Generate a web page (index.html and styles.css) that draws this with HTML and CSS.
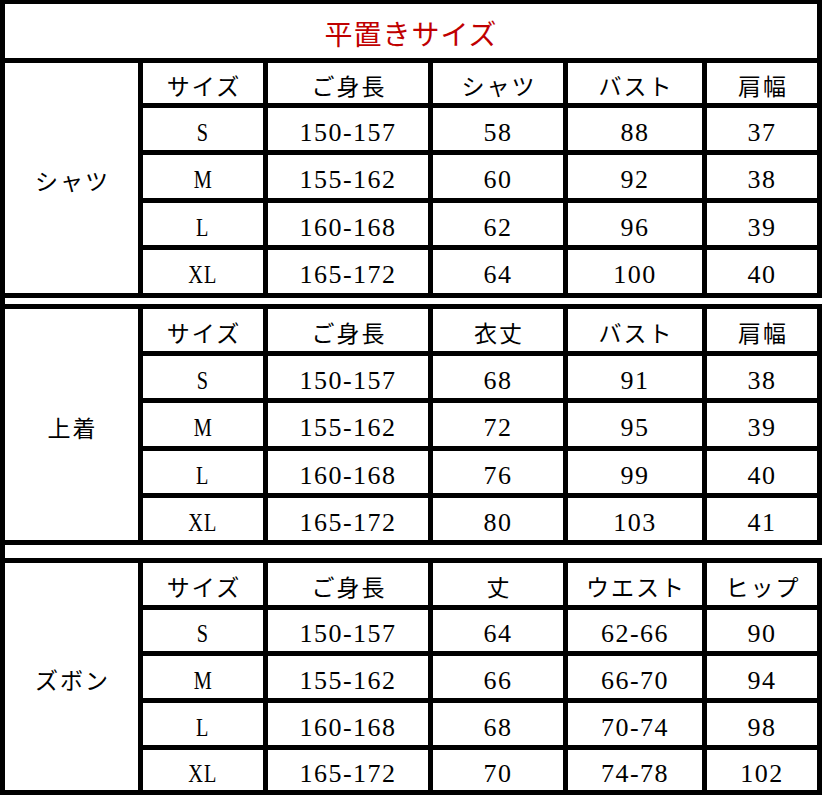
FILE: index.html
```
<!DOCTYPE html>
<html lang="ja">
<head>
<meta charset="utf-8">
<title>平置きサイズ</title>
<link rel="stylesheet" href="styles.css">
</head>
<body>
<div class="chart">
  <div class="title">平置きサイズ</div>

  <div class="sec s1">
    <div class="cell jp label">シャツ</div>
    <div class="cell jp">サイズ</div>
    <div class="cell jp">ご身長</div>
    <div class="cell jp">シャツ</div>
    <div class="cell jp">バスト</div>
    <div class="cell jp">肩幅</div>
    <div class="cell"><span class="sz">S</span></div>
    <div class="cell">150-157</div>
    <div class="cell">58</div>
    <div class="cell">88</div>
    <div class="cell">37</div>
    <div class="cell"><span class="sz">M</span></div>
    <div class="cell">155-162</div>
    <div class="cell">60</div>
    <div class="cell">92</div>
    <div class="cell">38</div>
    <div class="cell"><span class="sz">L</span></div>
    <div class="cell">160-168</div>
    <div class="cell">62</div>
    <div class="cell">96</div>
    <div class="cell">39</div>
    <div class="cell"><span class="sz">XL</span></div>
    <div class="cell">165-172</div>
    <div class="cell">64</div>
    <div class="cell">100</div>
    <div class="cell">40</div>
  </div>

  <div class="spacer sp1"></div>

  <div class="sec s2">
    <div class="cell jp label">上着</div>
    <div class="cell jp">サイズ</div>
    <div class="cell jp">ご身長</div>
    <div class="cell jp">衣丈</div>
    <div class="cell jp">バスト</div>
    <div class="cell jp">肩幅</div>
    <div class="cell"><span class="sz">S</span></div>
    <div class="cell">150-157</div>
    <div class="cell">68</div>
    <div class="cell">91</div>
    <div class="cell">38</div>
    <div class="cell"><span class="sz">M</span></div>
    <div class="cell">155-162</div>
    <div class="cell">72</div>
    <div class="cell">95</div>
    <div class="cell">39</div>
    <div class="cell"><span class="sz">L</span></div>
    <div class="cell">160-168</div>
    <div class="cell">76</div>
    <div class="cell">99</div>
    <div class="cell">40</div>
    <div class="cell"><span class="sz">XL</span></div>
    <div class="cell">165-172</div>
    <div class="cell">80</div>
    <div class="cell">103</div>
    <div class="cell">41</div>
  </div>

  <div class="spacer sp2"></div>

  <div class="sec s3">
    <div class="cell jp label">ズボン</div>
    <div class="cell jp">サイズ</div>
    <div class="cell jp">ご身長</div>
    <div class="cell jp">丈</div>
    <div class="cell jp">ウエスト</div>
    <div class="cell jp">ヒップ</div>
    <div class="cell"><span class="sz">S</span></div>
    <div class="cell">150-157</div>
    <div class="cell">64</div>
    <div class="cell">62-66</div>
    <div class="cell">90</div>
    <div class="cell"><span class="sz">M</span></div>
    <div class="cell">155-162</div>
    <div class="cell">66</div>
    <div class="cell">66-70</div>
    <div class="cell">94</div>
    <div class="cell"><span class="sz">L</span></div>
    <div class="cell">160-168</div>
    <div class="cell">68</div>
    <div class="cell">70-74</div>
    <div class="cell">98</div>
    <div class="cell"><span class="sz">XL</span></div>
    <div class="cell">165-172</div>
    <div class="cell">70</div>
    <div class="cell">74-78</div>
    <div class="cell">102</div>
  </div>
</div>
</body>
</html>
```

FILE: styles.css
```
* { box-sizing: border-box; }
body { margin: 0; background: #fff; }
.chart {
  width: 822px;
  font-family: "Liberation Serif", "Noto Sans CJK JP", serif;
  color: #000;
}
.title {
  height: 58px;
  border-style: solid;
  border-color: #000;
  border-width: 4px 5px 0 5px;
  display: flex;
  align-items: center;
  justify-content: center;
  padding-top: 4px;
  color: #c00000;
  font-family: "Noto Sans CJK JP", sans-serif;
  font-size: 28px;
  letter-spacing: 1px;
}
.sec {
  display: grid;
  grid-template-columns: 133px 120px 160px 130px 134px 110px;
  gap: 5px;
  padding: 5px;
  background: #000;
}
.s1 { grid-template-rows: 40px 42px 43px 42px 43px; }
.s2 { grid-template-rows: 42px 42px 43px 42px 42px; }
.s3 { grid-template-rows: 42px 41px 42px 42px 40px; }
.cell {
  background: #fff;
  display: flex;
  align-items: center;
  justify-content: center;
  padding-top: 7px;
  font-size: 26px;
  letter-spacing: 1.5px;
  line-height: 1;
}
.jp {
  font-family: "Noto Sans CJK JP", sans-serif;
  font-size: 23px;
  font-weight: 400;
  letter-spacing: 2px;
  padding-top: 5px;
  padding-left: 2px;
}
.label { grid-row: 1 / span 5; }
.sz { display: inline-block; transform: scaleX(0.78); }
.spacer { border-left: 5px solid #000; }
.sp1 { height: 6px; }
.sp2 { height: 13px; }
```
